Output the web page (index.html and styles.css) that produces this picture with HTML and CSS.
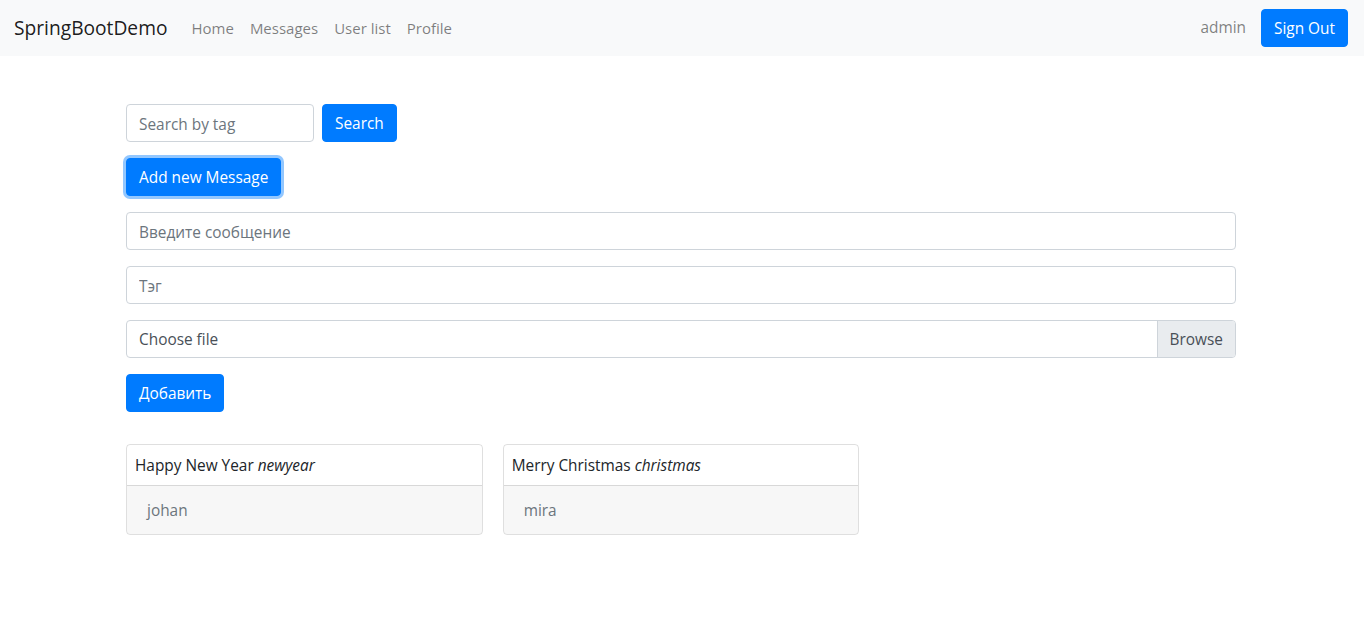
FILE: index.html
```html
<!DOCTYPE html>
<html lang="ru">
<head>
<meta charset="utf-8">
<title>SpringBootDemo</title>
<link rel="stylesheet" href="styles.css">
</head>
<body>
<nav class="navbar">
  <a class="brand" href="#">SpringBootDemo</a>
  <ul class="nav">
    <li><a class="nav-link" href="#">Home</a></li>
    <li><a class="nav-link" href="#">Messages</a></li>
    <li><a class="nav-link" href="#">User list</a></li>
    <li><a class="nav-link" href="#">Profile</a></li>
  </ul>
  <div class="nav-right">
    <span class="nav-user">admin</span>
    <button class="btn btn-primary">Sign Out</button>
  </div>
</nav>

<main class="container">
  <form class="search-row">
    <input class="form-control search-input" type="text" placeholder="Search by tag">
    <button class="btn btn-primary" type="button">Search</button>
  </form>

  <button class="btn btn-primary btn-focus" type="button">Add new Message</button>

  <form class="message-form">
    <input class="form-control" type="text" placeholder="Введите сообщение">
    <input class="form-control" type="text" placeholder="Тэг">
    <div class="custom-file">
      <span class="custom-file-label">Choose file</span>
      <span class="custom-file-browse">Browse</span>
    </div>
    <div><button class="btn btn-primary" type="button">Добавить</button></div>
  </form>

  <div class="card-columns">
    <div class="card">
      <div class="card-text"><span>Happy New Year</span> <i>newyear</i></div>
      <div class="card-footer">johan</div>
    </div>
    <div class="card">
      <div class="card-text"><span>Merry Christmas</span> <i>christmas</i></div>
      <div class="card-footer">mira</div>
    </div>
  </div>
</main>
</body>
</html>
```

FILE: styles.css
```css
* { box-sizing: border-box; }

body {
  margin: 0;
  font-family: "Open Sans", "Noto Sans", sans-serif;
  font-size: 15.4px;
  line-height: 24px;
  color: #212529;
  background: #fff;
}

.navbar {
  display: flex;
  align-items: center;
  height: 56px;
  padding: 8px 16px 8px 14px;
  background: #f8f9fa;
}

.brand {
  font-size: 19.2px;
  line-height: 30px;
  color: rgba(0, 0, 0, 0.9);
  text-decoration: none;
  margin-right: 16px;
}

.nav {
  display: flex;
  list-style: none;
  margin: 0;
  padding: 0;
  flex: 1;
}

.nav-link {
  display: block;
  padding: 8px 8px;
  font-size: 15px;
  color: rgba(0, 0, 0, 0.5);
  text-decoration: none;
}

.nav-right {
  display: flex;
  align-items: center;
  gap: 15px;
}

.nav-user {
  color: rgba(0, 0, 0, 0.5);
}

.btn {
  display: inline-block;
  font: inherit;
  line-height: 24px;
  height: 38px;
  padding: 7px 12px 5px;
  border: 1px solid transparent;
  border-radius: 4px;
  cursor: pointer;
}

.btn-primary {
  color: #fff;
  background: #007bff;
  border-color: #007bff;
}

.btn-focus {
  box-shadow: 0 0 0 3px rgba(38, 143, 255, 0.5);
}

.container {
  width: 1140px;
  margin: 0 auto;
  padding: 48px 16px 0 14px;
  display: flex;
  flex-direction: column;
  align-items: flex-start;
}

.search-row {
  display: flex;
  gap: 8px;
  margin: 0 0 16px;
}

.form-control {
  display: block;
  width: 100%;
  height: 38px;
  padding: 7px 12px 5px;
  font: inherit;
  line-height: 24px;
  color: #495057;
  background: #fff;
  border: 1px solid #ced4da;
  border-radius: 4px;
}

.form-control::placeholder {
  color: #6c757d;
}

.search-input {
  width: 188px;
}

.message-form {
  align-self: stretch;
  display: flex;
  flex-direction: column;
  gap: 16px;
  margin-top: 16px;
}

.custom-file {
  display: flex;
  height: 38px;
  border: 1px solid #ced4da;
  border-radius: 4px;
  overflow: hidden;
  color: #495057;
}

.custom-file-label {
  flex: 1;
  padding: 7px 12px 5px;
  line-height: 24px;
}

.custom-file-browse {
  padding: 7px 12px 5px;
  line-height: 24px;
  background: #e9ecef;
  border-left: 1px solid #ced4da;
}

.card-columns {
  align-self: stretch;
  display: grid;
  grid-template-columns: repeat(3, 1fr);
  column-gap: 20px;
  margin-top: 32px;
  align-items: start;
}

.card {
  border: 1px solid rgba(0, 0, 0, 0.125);
  border-radius: 4px;
  overflow: hidden;
}

.card-text {
  margin: 9px 8px 7px;
}

.card-footer {
  padding: 13px 20px 11px;
  background: rgba(0, 0, 0, 0.03);
  border-top: 1px solid rgba(0, 0, 0, 0.125);
  color: #6c757d;
}
```
